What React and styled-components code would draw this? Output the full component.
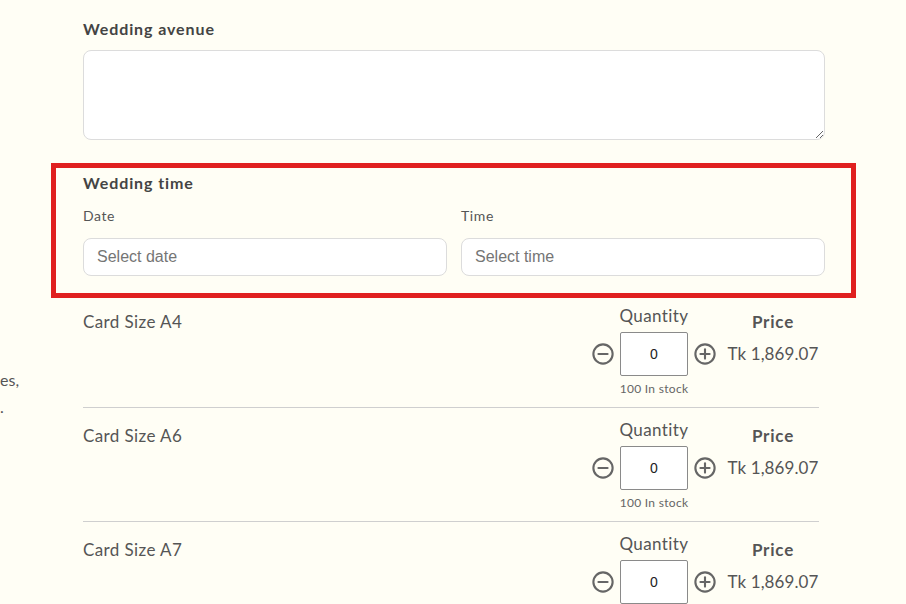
import React from "react";
import styled, { createGlobalStyle } from "styled-components";

const GlobalStyle = createGlobalStyle`
    html, body {
        margin:0;
        padding:0;
        background:#fffef5;
        font-family:"Lato", "Liberation Sans", sans-serif;
        color:#555;
        overflow:hidden;
    }
`

const Page = styled.div`
    display:grid;
    grid-template-columns:83px 742px;
    width:906px;
    height:604px;
    overflow:hidden;
`

const Side = styled.div`
    padding-top:366px;
    font-size:16px;
    line-height:27px;
    color:#555;
`

const Main = styled.div`
    display:flex;
    flex-direction:column;
    padding-top:19px;
`

const Label = styled.div`
    font-size:16px;
    font-weight:700;
    line-height:20px;
    color:#444;
    letter-spacing:0.9px;
`

const TextArea = styled.textarea`
    display:block;
    box-sizing:border-box;
    width:100%;
    height:90px;
    margin-top:11px;
    border:1px solid #dcdcdc;
    border-radius:8px;
    background:#fff;
    font-family:"Liberation Sans", sans-serif;
`

const Highlight = styled.div`
    margin:23px -31px -4px -32px;
    padding:5px 26px 17px 27px;
    border:5px solid #e0201f;
`

const Fields = styled.div`
    display:grid;
    grid-template-columns:1fr 1fr;
    column-gap:14px;
    margin-top:13px;
`

const Field = styled.div`
    display:flex;
    flex-direction:column;
    gap:12px;
`

const SubLabel = styled.div`
    font-size:14px;
    line-height:20px;
    color:#555;
    letter-spacing:0.6px;
`

const Input = styled.input`
    box-sizing:border-box;
    height:38px;
    padding:0 13px;
    border:1px solid #dcdcdc;
    border-radius:8px;
    background:#fff;
    font-family:"Liberation Sans", Arial, sans-serif;
    font-size:16px;
    &::placeholder { color:#757575; }
`

const ProductList = styled.div`
    padding-right:6px;
`

const Row = styled.div`
    display:flex;
    align-items:flex-start;
    padding:12px 0 12px;
    border-bottom:1px solid #cfcfcf;
`

const Name = styled.div`
    flex:1;
    padding-top:6px;
    font-size:17px;
    line-height:20px;
    color:#555;
    letter-spacing:0.4px;
`

const Qty = styled.div`
    display:flex;
    flex-direction:column;
    align-items:center;
    width:124px;
`

const QtyLabel = styled.div`
    font-size:17px;
    line-height:20px;
    color:#555;
    letter-spacing:0.4px;
`

const Stepper = styled.div`
    display:flex;
    align-items:center;
    gap:6px;
    margin-top:6px;
`

const Round = styled.button`
    display:flex;
    padding:0;
    border:none;
    background:none;
    cursor:pointer;
`

const QtyBox = styled.input`
    box-sizing:border-box;
    width:68px;
    height:44px;
    border:1px solid #8a8a8a;
    border-radius:2px;
    background:#fff;
    text-align:center;
    font-family:"Liberation Sans", Arial, sans-serif;
    font-size:14px;
    color:#222;
`

const Stock = styled.div`
    margin-top:7px;
    font-size:12px;
    line-height:12px;
    color:#666;
    letter-spacing:0.3px;
`

const PriceCol = styled.div`
    display:flex;
    flex-direction:column;
    align-items:center;
    gap:12px;
    width:92px;
    margin-left:11px;
    padding-top:6px;
`

const PriceLabel = styled.div`
    font-size:17px;
    font-weight:700;
    line-height:20px;
    color:#555;
    letter-spacing:0.8px;
`

const PriceValue = styled.div`
    font-size:17px;
    line-height:20px;
    color:#555;
    white-space:nowrap;
    letter-spacing:0.1px;
`

function CircleIcon({plus}) {
    return (
        <svg width="22" height="22" viewBox="0 0 24 24" fill="none" stroke="#666" strokeWidth="2.3" strokeLinecap="round">
            <circle cx="12" cy="12" r="10.5" />
            <line x1="7" y1="12" x2="17" y2="12" />
            {plus && <line x1="12" y1="7" x2="12" y2="17" />}
        </svg>
    )
}

const products = ["Card Size A4", "Card Size A6", "Card Size A7"];

function App() {
    return (
        <Page>
            <GlobalStyle />
            <Side>
                <div>es,</div>
                <div>.</div>
            </Side>
            <Main>
                <Label>Wedding avenue</Label>
                <TextArea />

                <Highlight>
                    <Label>Wedding time</Label>
                    <Fields>
                        <Field>
                            <SubLabel>Date</SubLabel>
                            <Input placeholder="Select date" />
                        </Field>
                        <Field>
                            <SubLabel>Time</SubLabel>
                            <Input placeholder="Select time" />
                        </Field>
                    </Fields>
                </Highlight>

                <ProductList>
                    {products.map((p) => (
                        <Row key={p}>
                            <Name>{p}</Name>
                            <Qty>
                                <QtyLabel>Quantity</QtyLabel>
                                <Stepper>
                                    <Round><CircleIcon /></Round>
                                    <QtyBox defaultValue="0" />
                                    <Round><CircleIcon plus /></Round>
                                </Stepper>
                                <Stock>100 In stock</Stock>
                            </Qty>
                            <PriceCol>
                                <PriceLabel>Price</PriceLabel>
                                <PriceValue>Tk 1,869.07</PriceValue>
                            </PriceCol>
                        </Row>
                    ))}
                </ProductList>
            </Main>
        </Page>
    )
}

export default App;
